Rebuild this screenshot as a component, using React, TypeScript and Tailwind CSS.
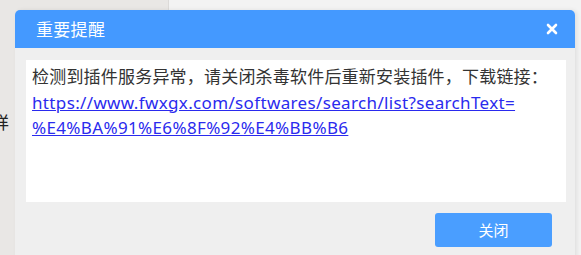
import React from "react";

const FONT = {
  fontFamily: '"Noto Sans", "Noto Sans CJK SC", sans-serif',
};

function CloseIcon() {
  return (
    <svg width="12" height="12" viewBox="0 0 12 12" aria-hidden="true">
      <path
        d="M2 2 L10 10 M10 2 L2 10"
        stroke="white"
        strokeWidth="2.6"
        strokeLinecap="round"
      />
    </svg>
  );
}

export default function App() {
  return (
    <div
      className="relative w-[581px] h-[255px] overflow-hidden flex"
      style={FONT}
    >
      {/* page behind the dialog */}
      <div className="w-[169px] h-full bg-[#e9e7e5] border-r border-[#dcdad8] relative">
        <span className="absolute left-[-8px] top-[110px] text-[17px] text-[#222]">
          详
        </span>
      </div>
      <div className="flex-1 h-full bg-[#f3f3f3]" />

      {/* dialog */}
      <div className="absolute left-[15px] top-[10px] w-[560px] h-[260px] flex flex-col rounded-t-[5px] overflow-hidden shadow-[2px_0_4px_rgba(0,0,0,0.08)]">
        <div className="h-[38px] bg-[#4499ff] flex items-center justify-between pl-[21px] pr-[17px]">
          <span className="text-white text-[17px] leading-none tracking-[0.3px]">
            重要提醒
          </span>
          <CloseIcon />
        </div>
        <div className="flex-1 bg-[#efefef] pt-[12px] pl-[11px] pr-[9px] flex flex-col">
          <div className="h-[142px] bg-white px-[6px] pt-[4px] text-[17px] leading-[25.5px] text-[#333]">
            <p className="tracking-[0.2px] whitespace-nowrap">
              检测到插件服务异常，请关闭杀毒软件后重新安装插件，下载链接：
            </p>
            <a href="#" className="text-[#2a2aee] underline tracking-[0.35px]">
              https://www.fwxgx.com/softwares/search/list?searchText=
              <br />
              %E4%BA%91%E6%8F%92%E4%BB%B6
            </a>
          </div>
          <div className="flex justify-end pt-[11px] pr-[14px]">
            <button className="w-[117px] h-[34px] rounded-[3px] bg-[#4a9eff] text-white text-[15px]">
              关闭
            </button>
          </div>
        </div>
      </div>
    </div>
  );
}
